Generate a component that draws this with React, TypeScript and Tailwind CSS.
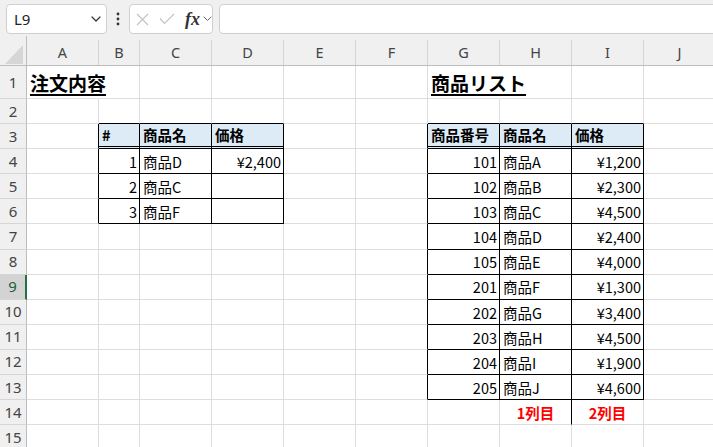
import React from "react";

const FONT = { fontFamily: '"Noto Sans CJK JP", "Noto Sans", sans-serif' };
const UI_FONT = { fontFamily: '"Noto Sans", "Liberation Sans", sans-serif' };

type Cell = { t: string; kind: "title" | "head" | "num" | "text" | "red" };

const data: Record<string, Cell> = {
  "1-1": { t: "注文内容", kind: "title" },
  "1-7": { t: "商品リスト", kind: "title" },
  "3-2": { t: "#", kind: "head" },
  "3-3": { t: "商品名", kind: "head" },
  "3-4": { t: "価格", kind: "head" },
  "3-7": { t: "商品番号", kind: "head" },
  "3-8": { t: "商品名", kind: "head" },
  "3-9": { t: "価格", kind: "head" },
  "4-2": { t: "1", kind: "num" },
  "5-2": { t: "2", kind: "num" },
  "6-2": { t: "3", kind: "num" },
  "4-3": { t: "商品D", kind: "text" },
  "5-3": { t: "商品C", kind: "text" },
  "6-3": { t: "商品F", kind: "text" },
  "4-4": { t: "¥2,400", kind: "num" },
  "14-8": { t: "1列目", kind: "red" },
  "14-9": { t: "2列目", kind: "red" },
};

const products: [string, string, string][] = [
  ["101", "商品A", "¥1,200"],
  ["102", "商品B", "¥2,300"],
  ["103", "商品C", "¥4,500"],
  ["104", "商品D", "¥2,400"],
  ["105", "商品E", "¥4,000"],
  ["201", "商品F", "¥1,300"],
  ["202", "商品G", "¥3,400"],
  ["203", "商品H", "¥4,500"],
  ["204", "商品I", "¥1,900"],
  ["205", "商品J", "¥4,600"],
];
products.forEach((p, i) => {
  const r = 4 + i;
  data[`${r}-7`] = { t: p[0], kind: "num" };
  data[`${r}-8`] = { t: p[1], kind: "text" };
  data[`${r}-9`] = { t: p[2], kind: "num" };
});

const COL_LETTERS = ["", "A", "B", "C", "D", "E", "F", "G", "H", "I", "J"];

function rightType(r: number, c: number): "grid" | "black" | "none" {
  if ((r === 1 && c === 1) || (r === 1 && c === 7)) return "none";
  if (r >= 3 && r <= 6 && c >= 1 && c <= 4) return "black";
  if (r >= 3 && r <= 13 && c >= 6 && c <= 9) return "black";
  if (r === 14 && c === 8) return "black";
  return "grid";
}

function bottomType(r: number, c: number): "grid" | "black" | "double" {
  if (c >= 2 && c <= 4) {
    if (r === 2) return "black";
    if (r === 3) return "double";
    if (r >= 4 && r <= 6) return "black";
  }
  if (c >= 7 && c <= 9) {
    if (r === 2) return "black";
    if (r === 3) return "double";
    if (r >= 4 && r <= 13) return "black";
  }
  return "grid";
}

function DataCell({ r, c }: { r: number; c: number }) {
  const rt = rightType(r, c);
  const bt = bottomType(r, c);
  const cell = data[`${r}-${c}`];
  const isHeadFill = r === 3 && ((c >= 2 && c <= 4) || (c >= 7 && c <= 9));
  const rCls =
    rt === "black"
      ? "border-r border-r-black"
      : rt === "none"
      ? "border-r border-r-transparent"
      : "border-r border-r-[#dddddd]";
  const bCls =
    bt === "black"
      ? "border-b border-b-black"
      : bt === "double"
      ? "border-b-[3px] border-double border-b-black"
      : "border-b border-b-[#dddddd]";
  let inner: React.ReactNode = null;
  let align = "justify-start pl-[3px]";
  let pad = "pt-[2px]";
  if (cell) {
    if (cell.kind === "title") {
      pad = "";
      inner = (
        <span className="relative z-10 whitespace-nowrap text-[19px] font-bold text-black underline underline-offset-[3px] decoration-[1.5px]">
          {cell.t}
        </span>
      );
    } else if (cell.kind === "head") {
      pad = "";
      inner = <span className="whitespace-nowrap text-[14.5px] font-bold text-black">{cell.t}</span>;
    } else if (cell.kind === "num") {
      align = "justify-end pr-[2px]";
      inner = <span className="whitespace-nowrap text-[14.5px] text-black">{cell.t}</span>;
    } else if (cell.kind === "red") {
      align = "justify-center";
      inner = <span className="whitespace-nowrap text-[14.5px] font-bold text-[#ff0000]">{cell.t}</span>;
    } else {
      inner = <span className="whitespace-nowrap text-[14.5px] text-black">{cell.t}</span>;
    }
  }
  return (
    <div
      className={`flex items-center overflow-visible leading-none ${pad} ${align} ${rCls} ${bCls} ${
        isHeadFill ? "bg-[#ddebf7]" : ""
      }`}
    >
      {inner}
    </div>
  );
}

function RowHeader({ r }: { r: number }) {
  const sel = r === 9;
  return (
    <div
      className={`flex items-center justify-center border-b border-b-[#d6d6d6] text-[15px] leading-none ${
        sel
          ? "bg-[#d3d3d3] text-[#1c5e38] border-r-2 border-r-[#217346]"
          : "bg-[#f0f0f0] text-[#444444] border-r border-r-[#bdbdbd]"
      }`}
      style={UI_FONT}
    >
      {r}
    </div>
  );
}

function Chevron({ className }: { className?: string }) {
  return (
    <svg className={className} width="10" height="6" viewBox="0 0 10 6" fill="none">
      <path d="M1 1 L5 5 L9 1" stroke="#333" strokeWidth="1.2" strokeLinecap="round" strokeLinejoin="round" />
    </svg>
  );
}

const GRID_COLS = "grid grid-cols-[27px_72px_41px_72px_72px_72px_72px_72px_72px_72px_72px]";

export default function App() {
  const rows = Array.from({ length: 15 }, (_, i) => i + 1);
  const cols = Array.from({ length: 10 }, (_, i) => i + 1);
  return (
    <div className="w-[713px] h-[447px] overflow-hidden bg-white" style={FONT}>
      {/* formula bar */}
      <div className="flex h-[36px] items-start bg-[#f0f0f0] pl-[6px] pt-[4px]">
        <div className="flex h-[30px] w-[101px] shrink-0 items-center justify-between rounded-[4px] border border-[#cfcfcf] bg-white pl-[7px] pr-[5px]">
          <span className="text-[15px] text-[#222222]" style={UI_FONT}>
            L9
          </span>
          <Chevron />
        </div>
        <div className="ml-[8px] flex h-[30px] w-[6px] shrink-0 items-center justify-center">
          <svg width="4" height="14" viewBox="0 0 4 14">
            <circle cx="2" cy="2" r="1.4" fill="#333" />
            <circle cx="2" cy="7" r="1.4" fill="#333" />
            <circle cx="2" cy="12" r="1.4" fill="#333" />
          </svg>
        </div>
        <div className="ml-[8px] flex h-[30px] w-[84px] shrink-0 items-center rounded-[4px] border border-[#cfcfcf] bg-white">
          <svg className="ml-[6px] shrink-0" width="13" height="13" viewBox="0 0 13 13">
            <path d="M1 1 L12 12 M12 1 L1 12" stroke="#c4c4c4" strokeWidth="1.2" />
          </svg>
          <svg className="ml-[10px] shrink-0" width="16" height="12" viewBox="0 0 16 12">
            <path d="M1 5.5 L5.5 10.5 L15 1" stroke="#c4c4c4" strokeWidth="1.2" fill="none" />
          </svg>
          <span
            className="ml-[10px] text-[18px] font-bold italic text-[#333333] leading-none"
            style={{ fontFamily: '"Liberation Serif", serif' }}
          >
            fx
          </span>
          <svg className="ml-[3px] shrink-0" width="9" height="6" viewBox="0 0 9 6" fill="none">
            <path d="M1 1 L4.5 4.5 L8 1" stroke="#666" strokeWidth="1" strokeLinecap="round" strokeLinejoin="round" />
          </svg>
        </div>
        <div className="ml-[6px] h-[30px] w-[520px] shrink-0 rounded-[4px] border border-[#cfcfcf] bg-white" />
      </div>

      {/* column header */}
      <div className={`${GRID_COLS} h-[30px] border-b border-b-[#bdbdbd] bg-[#f0f0f0]`}>
        <div className="relative border-r border-r-[#bdbdbd]">
          <svg className="absolute left-[5px] top-[9px]" width="19" height="20" viewBox="0 0 19 20">
            <path d="M18 0 L18 19 L0 19 Z" fill="#d6d6d6" />
          </svg>
        </div>
        {cols.map((c) => (
          <div key={c} className="flex flex-col">
            <div
              className="mt-[4px] flex flex-1 items-center justify-center border-r border-r-[#d4d4d4] text-[14.5px] text-[#444444]"
              style={UI_FONT}
            >
              {COL_LETTERS[c]}
            </div>
          </div>
        ))}
      </div>

      {/* rows */}
      {rows.map((r) => (
        <div key={r} className={`${GRID_COLS} ${r === 1 ? "h-[33px]" : "h-[25.1px]"}`}>
          <RowHeader r={r} />
          {cols.map((c) => (
            <DataCell key={c} r={r} c={c} />
          ))}
        </div>
      ))}
    </div>
  );
}
